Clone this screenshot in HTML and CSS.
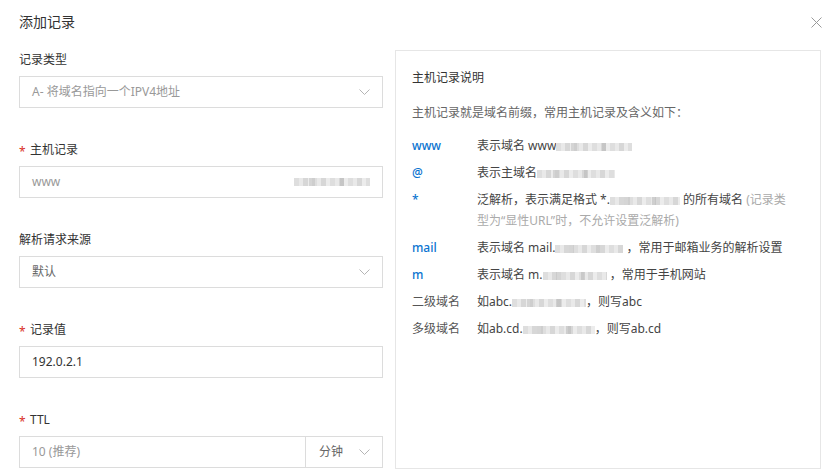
FILE: index.html
```html
<!DOCTYPE html>
<html lang="zh-CN">
<head>
<meta charset="utf-8">
<title>添加记录</title>
<link rel="stylesheet" href="styles.css">
</head>
<body>
<div class="dialog">
  <div class="header">
    <div class="title">添加记录</div>
    <svg class="close" width="11" height="11" viewBox="0 0 11 11"><path d="M0.5 0.5 L10.5 10.5 M10.5 0.5 L0.5 10.5" stroke="#9a9a9a" stroke-width="1" fill="none"/></svg>
  </div>
  <div class="body">
    <div class="form">
      <div class="field">
        <div class="label">记录类型</div>
        <div class="control select">
          <span class="val muted">A- 将域名指向一个IPV4地址</span>
          <svg class="chev" width="11" height="6" viewBox="0 0 11 6"><path d="M0.5 0.5 L5.5 5.5 L10.5 0.5" stroke="#b5b5b5" fill="none"/></svg>
        </div>
      </div>
      <div class="field">
        <div class="label"><span class="req">*</span>主机记录</div>
        <div class="control">
          <span class="val muted">www</span>
          <span class="blur blur-host"></span>
        </div>
      </div>
      <div class="field">
        <div class="label">解析请求来源</div>
        <div class="control select">
          <span class="val mid">默认</span>
          <svg class="chev" width="11" height="6" viewBox="0 0 11 6"><path d="M0.5 0.5 L5.5 5.5 L10.5 0.5" stroke="#b5b5b5" fill="none"/></svg>
        </div>
      </div>
      <div class="field">
        <div class="label"><span class="req">*</span>记录值</div>
        <div class="control">
          <span class="val dark">192.0.2.1</span>
        </div>
      </div>
      <div class="field">
        <div class="label"><span class="req">*</span>TTL</div>
        <div class="control split">
          <div class="part main"><span class="val muted">10 (推荐)</span></div>
          <div class="part unit">
            <span class="val mid">分钟</span>
            <svg class="chev" width="11" height="6" viewBox="0 0 11 6"><path d="M0.5 0.5 L5.5 5.5 L10.5 0.5" stroke="#b5b5b5" fill="none"/></svg>
          </div>
        </div>
      </div>
    </div>
    <div class="help">
      <div class="help-title">主机记录说明</div>
      <div class="help-desc">主机记录就是域名前缀，常用主机记录及含义如下：</div>
      <div class="row"><span class="key blue">www</span><span class="txt">表示域名 www<span class="blur blur-a"></span></span></div>
      <div class="row"><span class="key blue">@</span><span class="txt">表示主域名<span class="blur blur-b"></span></span></div>
      <div class="row"><span class="key blue">*</span><span class="txt">泛解析，表示满足格式 *.<span class="blur blur-c"></span> 的所有域名 <span class="note">(记录类<br>型为“显性URL”时，不允许设置泛解析)</span></span></div>
      <div class="row"><span class="key blue">mail</span><span class="txt">表示域名 mail.<span class="blur blur-d"></span> ，常用于邮箱业务的解析设置</span></div>
      <div class="row"><span class="key blue">m</span><span class="txt">表示域名 m.<span class="blur blur-e"></span> ，常用于手机网站</span></div>
      <div class="row"><span class="key">二级域名</span><span class="txt">如abc.<span class="blur blur-f"></span>，则写abc</span></div>
      <div class="row"><span class="key">多级域名</span><span class="txt">如ab.cd.<span class="blur blur-g"></span>，则写ab.cd</span></div>
    </div>
  </div>
</div>
</body>
</html>
```

FILE: styles.css
```css
* { box-sizing: border-box; }
html, body {
  margin: 0;
  padding: 0;
  background: #ffffff;
}
body {
  font-family: "Noto Sans", "Noto Sans CJK SC", sans-serif;
  font-size: 12px;
  color: #333;
  width: 832px;
  height: 476px;
  overflow: hidden;
}
.dialog {
  padding: 0 10px 0 19px;
}
.header {
  height: 44px;
  display: flex;
  align-items: center;
  justify-content: space-between;
}
.title {
  font-size: 14px;
  color: #333;
  line-height: 20px;
}
.body {
  display: flex;
  gap: 12px;
  padding-top: 6px;
}
.form {
  width: 364px;
  flex: none;
  padding-top: 2px;
}
.field {
  margin-bottom: 34px;
}
.field:last-child {
  margin-bottom: 0;
}
.label {
  line-height: 16px;
  height: 16px;
  margin-bottom: 8px;
  color: #333;
  display: flex;
  align-items: center;
}
.req {
  color: #d93026;
  font-size: 12px;
  width: 11px;
  padding-top: 3px;
}
.control {
  height: 32px;
  border: 1px solid #dcdcdc;
  display: flex;
  align-items: center;
  padding: 0 12px;
}
.val { line-height: 20px; }
.muted { color: #999; }
.mid { color: #666; }
.dark { color: #333; }
.select { justify-content: space-between; }
.split { padding: 0; }
.part {
  height: 100%;
  display: flex;
  align-items: center;
  padding: 0 12px;
}
.main {
  flex: 1;
  border-right: 1px solid #dcdcdc;
}
.unit {
  width: 76px;
  justify-content: space-between;
  padding: 0 12px 0 13px;
}
.blur {
  display: inline-block;
  height: 8px;
  vertical-align: middle;
  background:
    linear-gradient(90deg, rgba(255,255,255,0) 0 20%, rgba(190,190,190,0.5) 20% 28%, rgba(255,255,255,0) 28% 60%, rgba(180,180,180,0.5) 60% 66%, rgba(255,255,255,0) 66%),
    repeating-linear-gradient(90deg, #dedede 0 5px, #e9e9e9 5px 9px, #d7d7d7 9px 14px, #ececec 14px 18px);
}
.blur-host {
  width: 76px;
  margin-left: auto;
}
.help {
  width: 426px;
  height: 419px;
  border: 1px solid #e6e6e6;
  padding: 17px 15px 0 16px;
  color: #555;
  line-height: 21px;
}
.help-title {
  color: #333;
  line-height: 20px;
  margin-bottom: 14px;
}
.help-desc {
  margin-bottom: 12px;
  color: #666;
}
.row {
  display: flex;
  margin-bottom: 6px;
}
.key {
  width: 65px;
  flex: none;
  color: #555;
}
.blue {
  color: #0b74d0;
  font-weight: 500;
}
.txt { color: #444; }
.note { color: #aaa; }
.blur-a { width: 76px; }
.blur-b { width: 78px; }
.blur-c { width: 70px; }
.blur-d { width: 68px; }
.blur-e { width: 64px; }
.blur-f { width: 74px; }
.blur-g { width: 72px; }
```
